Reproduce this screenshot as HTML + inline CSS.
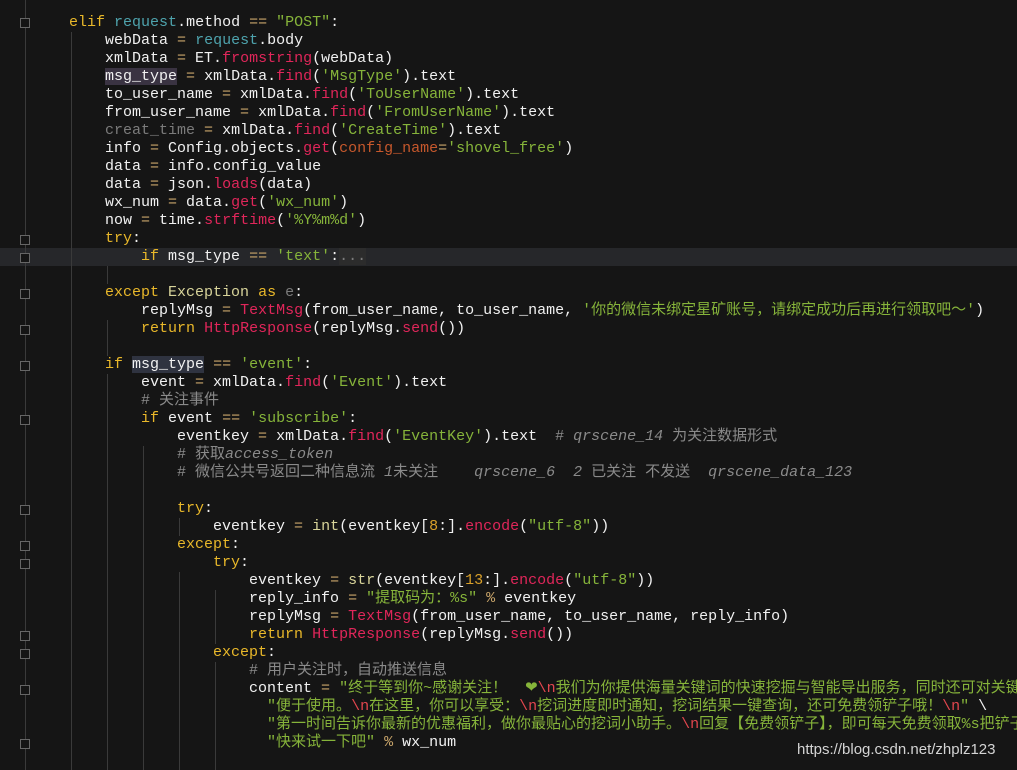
<!DOCTYPE html>
<html><head><meta charset="utf-8"><style>
html,body{margin:0;padding:0;background:#151515;width:1017px;height:770px;overflow:hidden}
.c{position:absolute;left:33px;top:14px;font-family:"Liberation Mono","Noto Sans CJK SC",monospace;font-size:15px;line-height:18px;color:#f1f1f1}
.l{height:18px;white-space:pre}
.k{color:#e9b82a}.t{color:#4ea3ad}.s{color:#86b43a}.f{color:#e0265a}.o{color:#c9a56a}.cm{color:#8a8a8a}
.g{color:#7b7b7b}.b{color:#d8d49a}.p{color:#c6582c}.n{color:#d9a02a}.e{color:#e2464e}.hl{background:#3a3342}.hb{background:#2f3340}
.i{font-style:italic}
.gut{position:absolute;left:25px;top:0;width:1px;height:770px;background:#3a3a3a}
.gd{position:absolute;width:1px;background:#3a3a3a}
.curl{position:absolute;left:0;top:248px;width:1017px;height:18px;background:#26272a}
.fm{position:absolute;left:20px;width:10px;height:10px;border:1px solid #666;background:#151515;box-sizing:border-box}
.wm{position:absolute;left:797px;top:741px;font-family:"Liberation Sans",sans-serif;font-size:15px;color:#d4d4d4}
</style></head><body>
<div class="curl"></div>
<div class="gut"></div>
<div class="gd" style="left:71px;top:32px;height:738px"></div>
<div class="gd" style="left:107px;top:266px;height:18px"></div>
<div class="gd" style="left:107px;top:320px;height:36px"></div>
<div class="gd" style="left:107px;top:374px;height:396px"></div>
<div class="gd" style="left:143px;top:446px;height:324px"></div>
<div class="gd" style="left:179px;top:518px;height:18px"></div>
<div class="gd" style="left:179px;top:572px;height:198px"></div>
<div class="gd" style="left:215px;top:590px;height:54px"></div>
<div class="gd" style="left:215px;top:662px;height:108px"></div>
<div class="fm" style="top:18px"></div>
<div class="fm" style="top:235px"></div>
<div class="fm" style="top:253px"></div>
<div class="fm" style="top:289px"></div>
<div class="fm" style="top:325px"></div>
<div class="fm" style="top:361px"></div>
<div class="fm" style="top:415px"></div>
<div class="fm" style="top:505px"></div>
<div class="fm" style="top:541px"></div>
<div class="fm" style="top:559px"></div>
<div class="fm" style="top:631px"></div>
<div class="fm" style="top:649px"></div>
<div class="fm" style="top:685px"></div>
<div class="fm" style="top:739px"></div>
<div class="c"><div class="l">    <span class="k">elif</span> <span class="t">request</span>.method <span class="o">==</span> <span class="s">"POST"</span>:</div><div class="l">        webData <span class="o">=</span> <span class="t">request</span>.body</div><div class="l">        xmlData <span class="o">=</span> ET.<span class="f">fromstring</span>(webData)</div><div class="l">        <span class="hl">msg_type</span> <span class="o">=</span> xmlData.<span class="f">find</span>(<span class="s">'MsgType'</span>).text</div><div class="l">        to_user_name <span class="o">=</span> xmlData.<span class="f">find</span>(<span class="s">'ToUserName'</span>).text</div><div class="l">        from_user_name <span class="o">=</span> xmlData.<span class="f">find</span>(<span class="s">'FromUserName'</span>).text</div><div class="l">        <span class="g">creat_time</span> <span class="o">=</span> xmlData.<span class="f">find</span>(<span class="s">'CreateTime'</span>).text</div><div class="l">        info <span class="o">=</span> Config.objects.<span class="f">get</span>(<span class="p">config_name</span><span class="o">=</span><span class="s">'shovel_free'</span>)</div><div class="l">        data <span class="o">=</span> info.config_value</div><div class="l">        data <span class="o">=</span> json.<span class="f">loads</span>(data)</div><div class="l">        wx_num <span class="o">=</span> data.<span class="f">get</span>(<span class="s">'wx_num'</span>)</div><div class="l">        now <span class="o">=</span> time.<span class="f">strftime</span>(<span class="s">'%Y%m%d'</span>)</div><div class="l">        <span class="k">try</span>:</div><div class="l">            <span class="k">if</span> msg_type <span class="o">==</span> <span class="s">'text'</span>:<span class="g" style="background:#2c2c2c">...</span></div><div class="l"> </div><div class="l">        <span class="k">except</span> <span class="b">Exception</span> <span class="k">as</span> <span class="g">e</span>:</div><div class="l">            replyMsg <span class="o">=</span> <span class="f">TextMsg</span>(from_user_name, to_user_name, <span class="s">'你的微信未绑定星矿账号，请绑定成功后再进行领取吧～'</span>)</div><div class="l">            <span class="k">return</span> <span class="f">HttpResponse</span>(replyMsg.<span class="f">send</span>())</div><div class="l"> </div><div class="l">        <span class="k">if</span> <span class="hb">msg_type</span> <span class="o">==</span> <span class="s">'event'</span>:</div><div class="l">            event <span class="o">=</span> xmlData.<span class="f">find</span>(<span class="s">'Event'</span>).text</div><div class="l">            <span class="cm"># 关注事件</span></div><div class="l">            <span class="k">if</span> event <span class="o">==</span> <span class="s">'subscribe'</span>:</div><div class="l">                eventkey <span class="o">=</span> xmlData.<span class="f">find</span>(<span class="s">'EventKey'</span>).text  <span class="cm"># <span class="i">qrscene_14</span> 为关注数据形式</span></div><div class="l">                <span class="cm"># 获取<span class="i">access_token</span></span></div><div class="l">                <span class="cm"># 微信公共号返回二种信息流 <span class="i">1</span>未关注    <span class="i">qrscene_6</span>  <span class="i">2</span> 已关注 不发送  <span class="i">qrscene_data_123</span></span></div><div class="l"> </div><div class="l">                <span class="k">try</span>:</div><div class="l">                    eventkey <span class="o">=</span> <span class="b">int</span>(eventkey[<span class="n">8</span>:].<span class="f">encode</span>(<span class="s">"utf-8"</span>))</div><div class="l">                <span class="k">except</span>:</div><div class="l">                    <span class="k">try</span>:</div><div class="l">                        eventkey <span class="o">=</span> <span class="b">str</span>(eventkey[<span class="n">13</span>:].<span class="f">encode</span>(<span class="s">"utf-8"</span>))</div><div class="l">                        reply_info <span class="o">=</span> <span class="s">"提取码为：%s"</span> <span class="o">%</span> eventkey</div><div class="l">                        replyMsg <span class="o">=</span> <span class="f">TextMsg</span>(from_user_name, to_user_name, reply_info)</div><div class="l">                        <span class="k">return</span> <span class="f">HttpResponse</span>(replyMsg.<span class="f">send</span>())</div><div class="l">                    <span class="k">except</span>:</div><div class="l">                        <span class="cm"># 用户关注时，自动推送信息</span></div><div class="l">                        content <span class="o">=</span> <span class="s">"终于等到你~感谢关注！  ❤<span class="e">\n</span>我们为你提供海量关键词的快速挖掘与智能导出服务，同时还可对关键词</span></div><div class="l">                          <span class="s">"便于使用。<span class="e">\n</span>在这里，你可以享受：<span class="e">\n</span>挖词进度即时通知，挖词结果一键查询，还可免费领铲子哦！<span class="e">\n</span>"</span> \</div><div class="l">                          <span class="s">"第一时间告诉你最新的优惠福利，做你最贴心的挖词小助手。<span class="e">\n</span>回复【免费领铲子】，即可每天免费领取%s把铲子</span></div><div class="l">                          <span class="s">"快来试一下吧"</span> <span class="o">%</span> wx_num</div></div>
<div class="wm">https://blog.csdn.net/zhplz123</div>
</body></html>
